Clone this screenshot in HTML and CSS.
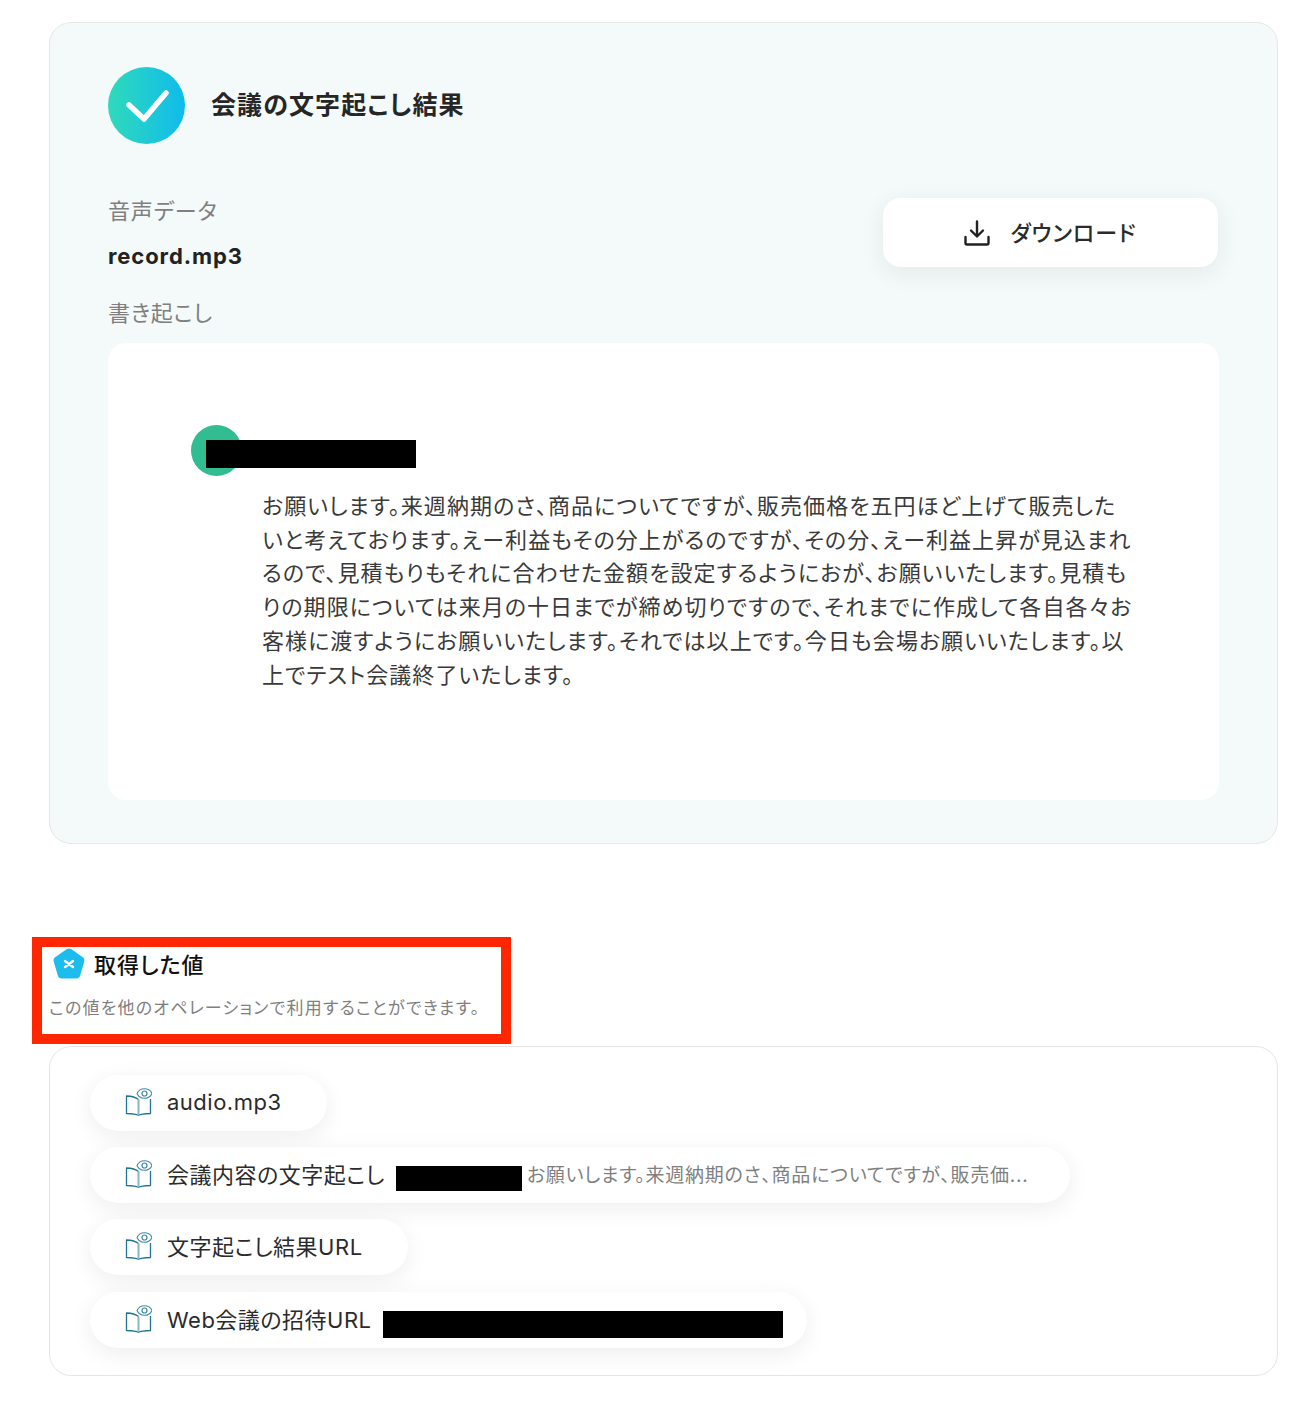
FILE: index.html
```html
<!DOCTYPE html>
<html lang="ja">
<head>
    <meta charset="UTF-8">
    <meta name="viewport" content="width=device-width, initial-scale=1.0">
    <title>会議の文字起こし結果</title>
    <link rel="stylesheet" href="styles.css">
</head>
<body>

    <svg class="icon-defs" width="0" height="0">
        <defs>
            <linearGradient id="check-grad" x1="0" y1="0" x2="1" y2="0">
                <stop offset="0" stop-color="#2fdabb"/>
                <stop offset="1" stop-color="#10bbec"/>
            </linearGradient>
            <symbol id="book-eye" viewBox="0 0 27 28">
                <path d="M13.5 11.5C11 9.5 6 8.2 1.5 8V25.5C6 25.7 11 26 13.5 27.2C16 26 21 25.7 25.5 25.5V11" fill="none" stroke="#1f7590" stroke-width="1.3" stroke-linejoin="round"/>
                <path d="M13.5 11.5V27" fill="none" stroke="#86b9c8" stroke-width="2"/>
                <path d="M12 5.5C13.5 2.2 16.2 0.7 19.5 0.7S25.5 2.2 27 5.5C25.5 8.8 22.8 10.3 19.5 10.3S13.5 8.8 12 5.5Z" fill="#fff" stroke="#3d8aa3" stroke-width="1.1"/>
                <circle cx="19.5" cy="5.5" r="2.5" fill="none" stroke="#3d8aa3" stroke-width="1.2"/>
            </symbol>
        </defs>
    </svg>

    <section class="result-card">
        <div class="result-head">
            <svg class="check-icon" viewBox="0 0 77 77" width="77" height="77">
                <circle cx="38.5" cy="38.5" r="38.5" fill="url(#check-grad)"/>
                <path d="M21 38L36 52L58 26" fill="none" stroke="#fff" stroke-width="5.5" stroke-linecap="round" stroke-linejoin="round"/>
            </svg>
            <h1>会議の文字起こし結果</h1>
        </div>

        <div class="file-row">
            <div>
                <div class="field-label">音声データ</div>
                <div class="file-name">record.mp3</div>
            </div>
            <button class="download-btn">
                <svg viewBox="0 0 26 26" width="26" height="26">
                    <path d="M13 1.5V16M7 10.5L13 16.5L19 10.5M1.5 17V23C1.5 24 2 24.5 3 24.5H23C24 24.5 24.5 24 24.5 23V17" fill="none" stroke="#222" stroke-width="2.4" stroke-linecap="round" stroke-linejoin="round"/>
                </svg>
                <span class="download-text">ダウンロード</span>
            </button>
        </div>

        <div class="field-label transcript-label">書き起こし</div>
        <div class="transcript-box">
            <div class="speaker">
                <div class="avatar"></div>
                <div class="redact speaker-redact"></div>
            </div>
            <p class="transcript-text">お願いします。来週納期のさ、商品についてですが、販売価格を五円ほど上げて販売したいと考えております。えー利益もその分上がるのですが、その分、えー利益上昇が見込まれるので、見積もりもそれに合わせた金額を設定するようにおが、お願いいたします。見積もりの期限については来月の十日までが締め切りですので、それまでに作成して各自各々お客様に渡すようにお願いいたします。それでは以上です。今日も会場お願いいたします。以上でテスト会議終了いたします。</p>
        </div>
    </section>

    <div class="values-head">
        <div class="values-title">
            <svg viewBox="0 0 32 31" width="32" height="31">
                <path d="M13.5 1.2C15 0.2 17 0.2 18.5 1.2L29.8 9.2C31.2 10.2 31.8 11.8 31.3 13.4L27.2 27.4C26.7 29.2 25.2 30.5 23.2 30.5H8.8C6.8 30.5 5.3 29.2 4.8 27.4L0.7 13.4C0.2 11.8 0.8 10.2 2.2 9.2Z" fill="#1cbcec"/>
                <path d="M12 13L20 19M20 13L12 19" stroke="#fff" stroke-width="2.4" stroke-linecap="round"/>
            </svg>
            <h2>取得した値</h2>
        </div>
        <p class="values-sub">この値を他のオペレーションで利用することができます。</p>
    </div>

    <section class="values-card">
        <div class="pill">
            <svg class="book-icon"><use href="#book-eye"/></svg>
            <span class="pill-latin">audio.mp3</span>
        </div>
        <div class="pill pill-wide">
            <svg class="book-icon"><use href="#book-eye"/></svg>
            <span>会議内容の文字起こし</span>
            <div class="redact redact-short"></div>
            <span class="pill-value">お願いします。来週納期のさ、商品についてですが、販売価...</span>
        </div>
        <div class="pill">
            <svg class="book-icon"><use href="#book-eye"/></svg>
            <span>文字起こし結果URL</span>
        </div>
        <div class="pill pill-tight">
            <svg class="book-icon"><use href="#book-eye"/></svg>
            <span>Web会議の招待URL</span>
            <div class="redact redact-long"></div>
        </div>
    </section>

</body>
</html>
```

FILE: styles.css
```css
* {
    box-sizing: border-box;
}
body {
    margin: 0;
    padding: 22px 24px 48px 49px;
    background-color: #fff;
    color: #2b2b2b;
    font-family: Inter, "Noto Sans CJK JP", sans-serif;
    font-feature-settings: "palt";
}
h1, h2, p {
    margin: 0;
}
.icon-defs {
    position: absolute;
}
.redact {
    background-color: #000;
}

/* 文字起こし結果 */
.result-card {
    height: 822px;
    padding: 44px 58px 0;
    background-color: #f4f9f9;
    border: 1px solid #e3e8e8;
    border-radius: 22px;
}
.result-head {
    display: flex;
    align-items: center;
    gap: 26px;
}
h1 {
    margin-bottom: 5px;
    font-size: 25px;
    font-weight: 600;
    letter-spacing: 1.1px;
    color: #262626;
}
.file-row {
    display: flex;
    justify-content: space-between;
    align-items: flex-start;
    margin-top: 51px;
}
.field-label {
    font-size: 22px;
    line-height: 33px;
    letter-spacing: 0.8px;
    color: #7f7f7f;
}
.file-name {
    margin-top: 12px;
    font-size: 22px;
    line-height: 33px;
    font-weight: 700;
    letter-spacing: 0.9px;
    color: #222;
}
.download-btn {
    display: flex;
    justify-content: center;
    align-items: center;
    gap: 20px;
    width: 335px;
    height: 69px;
    margin: 3px 1px 0 0;
    background-color: #fff;
    border: 0;
    border-radius: 18px;
    box-shadow: 0 6px 24px rgba(40, 70, 70, 0.08);
    font-family: inherit;
    font-feature-settings: inherit;
    font-size: 22px;
    font-weight: 500;
    letter-spacing: 1px;
    color: #2b2b2b;
}
.download-text {
    margin-bottom: 4px;
}
.transcript-label {
    margin-top: 24px;
}
.transcript-box {
    height: 457px;
    margin-top: 13px;
    padding: 82px 0 0 83px;
    background-color: #fff;
    border-radius: 18px;
}
.speaker {
    position: relative;
}
.avatar {
    width: 51px;
    height: 51px;
    border-radius: 50%;
    background-color: #31bc92;
}
.speaker-redact {
    position: absolute;
    top: 15px;
    left: 15px;
    width: 210px;
    height: 28px;
}
.transcript-text {
    width: 872px;
    margin: 14px 0 0 71px;
    font-size: 22px;
    line-height: 33.7px;
    letter-spacing: 1.05px;
    color: #3a3a3a;
}

/* 取得した値 */
.values-head {
    width: 479px;
    height: 107px;
    margin: 93px 0 2px -17px;
    padding: 0 0 0 7px;
    border: 10px solid #ff2600;
}
.values-title {
    display: flex;
    align-items: center;
    gap: 9px;
    margin-left: 4px;
}
h2 {
    font-size: 22px;
    font-weight: 500;
    letter-spacing: 1px;
    color: #111;
}
.values-sub {
    margin-top: 16px;
    font-size: 17px;
    line-height: 26px;
    letter-spacing: 1.2px;
    color: #7f7f7f;
}
.values-card {
    display: flex;
    flex-direction: column;
    align-items: flex-start;
    gap: 16.2px;
    height: 330px;
    padding: 28px 0 0 40px;
    border: 1px solid #e3e6e6;
    border-radius: 22px;
}
.pill {
    display: flex;
    align-items: center;
    height: 56px;
    padding: 0 45px 0 35px;
    background-color: #fff;
    border-radius: 28px;
    box-shadow: 0 6px 24px rgba(0, 0, 0, 0.07);
    font-size: 22px;
    letter-spacing: 0.5px;
    color: #2b2b2b;
}
.pill span {
    margin-bottom: 4px;
}
.pill .pill-latin {
    margin-bottom: 2px;
}
.pill-wide {
    padding-right: 41px;
}
.pill-tight {
    padding-right: 24px;
}
.book-icon {
    flex: none;
    width: 27px;
    height: 28px;
    margin: 0 15px 2px 0;
}
.redact-short {
    width: 126px;
    height: 25px;
    margin: 6px 5px 0 11px;
}
.redact-long {
    width: 400px;
    height: 27px;
    margin: 9px 0 0 11px;
}
.pill-value {
    font-size: 19px;
    letter-spacing: 0.75px;
    color: #7f7f7f;
}
```
